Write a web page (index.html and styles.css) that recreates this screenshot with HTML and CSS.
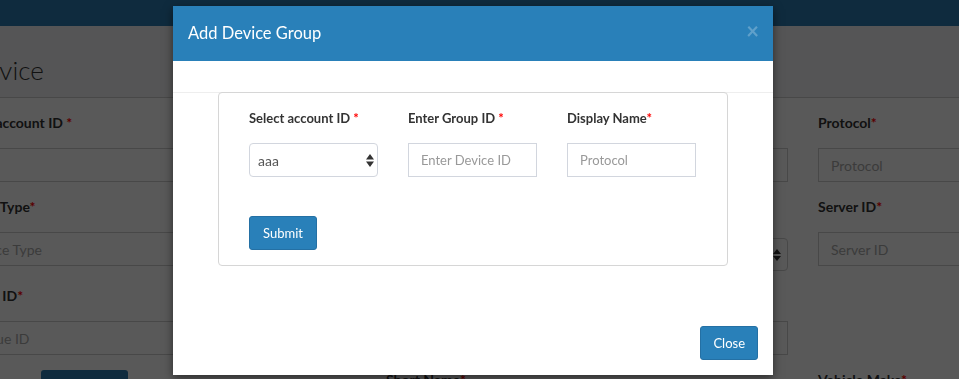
FILE: index.html
```html
<!DOCTYPE html>
<html lang="en">

<head>
    <meta charset="UTF-8">
    <meta name="viewport" content="width=device-width, initial-scale=1.0">
    <title>Add Device</title>
    <link rel="stylesheet" href="styles.css">
</head>

<body>
    <div class="page">
        <nav class="topbar"></nav>
        <div class="page-head">
            <h2>Add Device</h2>
        </div>
        <div class="page-body">
            <div class="field-grid">
                <div class="field">
                    <label>Select account ID <span class="req">*</span></label>
                    <input type="text" class="bg-input">
                </div>
                <div class="field">
                    <label>Device ID<span class="req">*</span></label>
                    <input type="text" class="bg-input" placeholder="Device ID">
                </div>
                <div class="field">
                    <label>Protocol<span class="req">*</span></label>
                    <input type="text" class="bg-input" placeholder="Protocol">
                </div>

                <div class="field">
                    <label>Device Type<span class="req">*</span></label>
                    <input type="text" class="bg-input" placeholder="Device Type">
                </div>
                <div class="field">
                    <label>Group ID<span class="req">*</span></label>
                    <div class="bg-select">
                        <span>Select</span>
                        <svg width="8" height="12" viewBox="0 0 8 12"><path d="M4 0L8 5H0Z M4 12L0 7H8Z" fill="#333"/></svg>
                    </div>
                </div>
                <div class="field">
                    <label>Server ID<span class="req">*</span></label>
                    <input type="text" class="bg-input" placeholder="Server ID">
                </div>

                <div class="field">
                    <label>Unique ID<span class="req">*</span></label>
                    <input type="text" class="bg-input" placeholder="Unique ID">
                </div>
                <div class="field">
                    <label>IMEI<span class="req">*</span></label>
                    <input type="text" class="bg-input" placeholder="IMEI">
                </div>
                <div class="field"></div>

                <div class="field">
                    <button class="bg-btn">Save</button>
                </div>
                <div class="field">
                    <label>Short Name<span class="req">*</span></label>
                </div>
                <div class="field">
                    <label>Vehicle Make<span class="req">*</span></label>
                </div>
            </div>
        </div>
    </div>

    <div class="backdrop"></div>

    <div class="modal">
        <div class="modal-header">
            <h4>Add Device Group</h4>
            <button class="x-btn">&times;</button>
        </div>
        <div class="modal-body">
            <div class="divider">
                <div class="card">
                    <div class="form-row">
                        <div class="form-group">
                            <label>Select account ID <span class="req">*</span></label>
                            <div class="select-wrap">
                                <select class="form-control">
                                    <option>aaa</option>
                                </select>
                                <svg class="arrows" width="8" height="13" viewBox="0 0 8 13"><path d="M4 0L8 5.5H0Z M4 13L0 7.5H8Z" fill="#333"/></svg>
                            </div>
                        </div>
                        <div class="form-group">
                            <label>Enter Group ID <span class="req">*</span></label>
                            <input type="text" class="form-control" placeholder="Enter Device ID">
                        </div>
                        <div class="form-group">
                            <label>Display Name<span class="req">*</span></label>
                            <input type="text" class="form-control" placeholder="Protocol">
                        </div>
                    </div>
                    <button class="btn">Submit</button>
                </div>
            </div>
        </div>
        <div class="modal-footer">
            <button class="btn btn-close">Close</button>
        </div>
    </div>
</body>

</html>
```

FILE: styles.css
```css
* {
    margin: 0;
    padding: 0;
    box-sizing: border-box;
    font-family: Lato, "Noto Sans", sans-serif;
}

body {
    width: 959px;
    height: 379px;
    overflow: hidden;
    background-color: #fff;
}

/* page behind the modal */
.topbar {
    height: 26px;
    background-color: #2b7bb1;
}

.page-head {
    height: 72px;
    background-color: #f3f4f5;
    border-bottom: 1px solid #cfcfcf;
    display: flex;
    align-items: center;
    padding-top: 16px;
    margin-left: -86px;
}

.page-head h2 {
    font-size: 26px;
    font-weight: 300;
    color: #333;
}

.page-body {
    padding-top: 15px;
    margin-left: -46px;
}

.field-grid {
    display: grid;
    grid-template-columns: repeat(3, 402px);
    column-gap: 30px;
    align-items: start;
}

.field {
    margin-bottom: 15px;
}

.field label {
    display: block;
    height: 20px;
    line-height: 20px;
    font-size: 14px;
    font-weight: 700;
    color: #333;
    margin-bottom: 15px;
}

.req {
    color: #f00;
}

.bg-input {
    width: 100%;
    height: 34px;
    border: 1px solid #cfcfcf;
    outline: none;
    padding: 0 12px;
    font-size: 14px;
    background-color: #fff;
}

.bg-input::placeholder {
    color: #aaa;
}

.bg-select {
    width: 100%;
    height: 33px;
    margin-top: 21px;
    border: 1px solid #cfcfcf;
    border-radius: 4px;
    display: flex;
    justify-content: space-between;
    align-items: center;
    padding: 0 6px 0 9px;
    font-size: 14px;
    color: #555;
}

.bg-btn {
    margin: 0 0 0 87px;
    width: 87px;
    height: 34px;
    border: none;
    border-radius: 3px;
    background-color: #2b7bb1;
    color: #fff;
}

.backdrop {
    position: fixed;
    inset: 0;
    background-color: rgba(0, 0, 0, 0.65);
}

/* modal */
.modal {
    position: absolute;
    left: 173px;
    top: 6px;
    width: 600px;
    background-color: #fff;
    box-shadow: 0 3px 9px rgba(0, 0, 0, 0.5);
}

.modal-header {
    height: 55px;
    background-color: #2980b9;
    padding: 0 15px;
    display: flex;
    align-items: center;
    justify-content: space-between;
}

.modal-header h4 {
    font-size: 16.5px;
    font-weight: 400;
    color: #fff;
    margin-top: -2px;
}

.x-btn {
    border: none;
    background: transparent;
    color: #fff;
    opacity: 0.25;
    font-size: 22px;
    font-weight: 700;
    line-height: 1;
    margin-top: -5px;
    margin-right: -1px;
}

.modal-body {
    padding-top: 31px;
}

.divider {
    border-top: 1px solid #eee;
    padding-bottom: 45px;
}

.card {
    margin: -1px 45px 0 45px;
    border: 1px solid #d6d6d6;
    border-radius: 4px;
    padding: 15px 30px 15px 30px;
}

.form-row {
    display: grid;
    grid-template-columns: repeat(3, 129px);
    column-gap: 30px;
    margin-bottom: 39px;
}

.form-group label {
    display: block;
    height: 20px;
    line-height: 20px;
    font-size: 13px;
    font-weight: 700;
    color: #333;
    margin-bottom: 15px;
    white-space: nowrap;
}

.form-control {
    width: 100%;
    height: 34px;
    border: 1px solid #d2d6de;
    outline: none;
    padding: 0 12px;
    font-size: 13px;
    color: #555;
    background-color: #fff;
}

.form-control::placeholder {
    color: #999;
}

.select-wrap {
    position: relative;
}

select.form-control {
    appearance: none;
    border-radius: 4px;
    padding: 0 8px;
    font-size: 14px;
}

.arrows {
    position: absolute;
    right: 4px;
    top: 11px;
}

.btn {
    height: 34px;
    padding: 0 13px;
    border: 1px solid #2470a4;
    border-radius: 3px;
    background-color: #2980b9;
    color: #fff;
    font-size: 13px;
}

.btn-close {
    padding: 0 12px;
}

.modal-footer {
    padding: 15px;
    display: flex;
    justify-content: flex-end;
}
```
